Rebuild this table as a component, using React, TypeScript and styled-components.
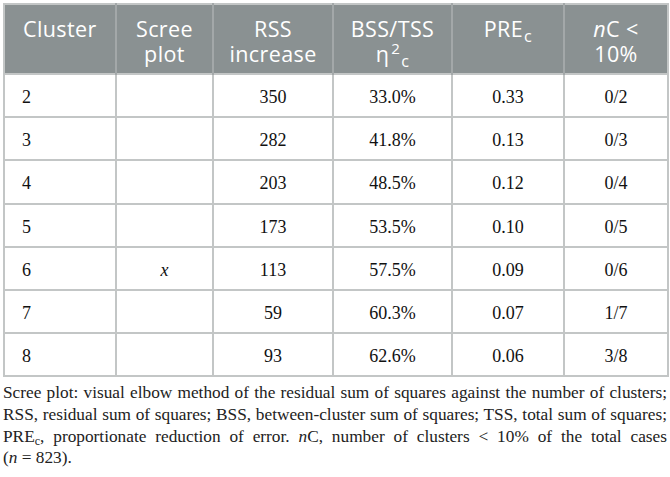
import React from "react";
import styled, { createGlobalStyle } from "styled-components";

const Global = createGlobalStyle`
  html, body { margin: 0; padding: 0; background: #fff; }
  body { width: 670px; height: 477px; overflow: hidden; }
`;

const Page = styled.div`
  padding: 3px 3px 0 3px;
  width: 664px;
`;

const Table = styled.table`
  width: 664px;
  border-collapse: collapse;
  table-layout: fixed;
  border: 2px solid #c3c6c6;
`;

const HeadCell = styled.th<{ $align?: string }>`
  background: #8a9192;
  color: #fff;
  font-family: "Open Sans", "Lato", sans-serif;
  font-weight: 400;
  font-size: 21.5px;
  letter-spacing: 0.4px;
  line-height: 25px;
  text-align: ${(p) => p.$align || "center"};
  vertical-align: top;
  padding: 11px 4px 0 ${(p) => (p.$align === "left" ? "18px" : "4px")};
  height: 57px;
  border-left: 2px solid #a3a8a9;
  &:first-child { border-left: none; }
`;

const Cell = styled.td<{ $align?: string }>`
  font-family: "Liberation Serif", "Times New Roman", serif;
  font-size: 18px;
  color: #111;
  text-align: ${(p) => p.$align || "center"};
  padding: 4px 0 0 ${(p) => (p.$align === "left" ? "17px" : "0")};
  height: 37.2px;
  border: 2px solid #c3c6c6;
`;

const Caption = styled.div`
  margin-top: 5px;
  width: 664px;
  font-family: "Liberation Serif", "Times New Roman", serif;
  font-size: 17.3px;
  line-height: 21.7px;
  color: #222;
`;

const CaptionLine = styled.div<{ $last?: boolean }>`
  text-align: ${(p) => (p.$last ? "left" : "justify")};
  text-align-last: ${(p) => (p.$last ? "left" : "justify")};
`;

const Sub = styled.sub`
  font-size: 0.7em;
  vertical-align: -0.25em;
  line-height: 0;
`;

const HeadSub = styled.sub`
  font-size: 0.75em;
  vertical-align: -0.3em;
  line-height: 0;
  margin-left: 1px;
`;

const HeadSup = styled.sup`
  font-size: 0.7em;
  vertical-align: 0.5em;
  line-height: 0;
  margin-left: 2px;
`;

const Ital = styled.i`
  font-style: italic;
`;

const rows = [
  ["2", "", "350", "33.0%", "0.33", "0/2"],
  ["3", "", "282", "41.8%", "0.13", "0/3"],
  ["4", "", "203", "48.5%", "0.12", "0/4"],
  ["5", "", "173", "53.5%", "0.10", "0/5"],
  ["6", "x", "113", "57.5%", "0.09", "0/6"],
  ["7", "", "59", "60.3%", "0.07", "1/7"],
  ["8", "", "93", "62.6%", "0.06", "3/8"],
];

const widths = [112, 97, 120, 119, 112, 104];

export default function App() {
  return (
    <Page>
      <Global />
      <Table>
        <colgroup>
          {widths.map((w, i) => (
            <col key={i} style={{ width: w }} />
          ))}
        </colgroup>
        <thead>
          <tr>
            <HeadCell $align="left">Cluster</HeadCell>
            <HeadCell>
              Scree
              <br />
              plot
            </HeadCell>
            <HeadCell>
              RSS
              <br />
              increase
            </HeadCell>
            <HeadCell>
              BSS/TSS
              <br />
              η<HeadSup>2</HeadSup>
              <HeadSub>c</HeadSub>
            </HeadCell>
            <HeadCell>
              PRE<HeadSub>c</HeadSub>
            </HeadCell>
            <HeadCell>
              <Ital>n</Ital>C &lt;
              <br />
              10%
            </HeadCell>
          </tr>
        </thead>
        <tbody>
          {rows.map((r) => (
            <tr key={r[0]}>
              {r.map((c, i) => (
                <Cell key={i} $align={i === 0 ? "left" : "center"}>
                  {i === 1 && c ? <Ital>{c}</Ital> : c}
                </Cell>
              ))}
            </tr>
          ))}
        </tbody>
      </Table>
      <Caption>
        <CaptionLine>
          Scree plot: visual elbow method of the residual sum of squares against the number of clusters;
        </CaptionLine>
        <CaptionLine>
          RSS, residual sum of squares; BSS, between-cluster sum of squares; TSS, total sum of squares;
        </CaptionLine>
        <CaptionLine>
          PRE<Sub>c</Sub>, proportionate reduction of error. <Ital>n</Ital>C, number of clusters &lt; 10% of the total cases
        </CaptionLine>
        <CaptionLine $last>
          (<Ital>n</Ital> = 823).
        </CaptionLine>
      </Caption>
    </Page>
  );
}
